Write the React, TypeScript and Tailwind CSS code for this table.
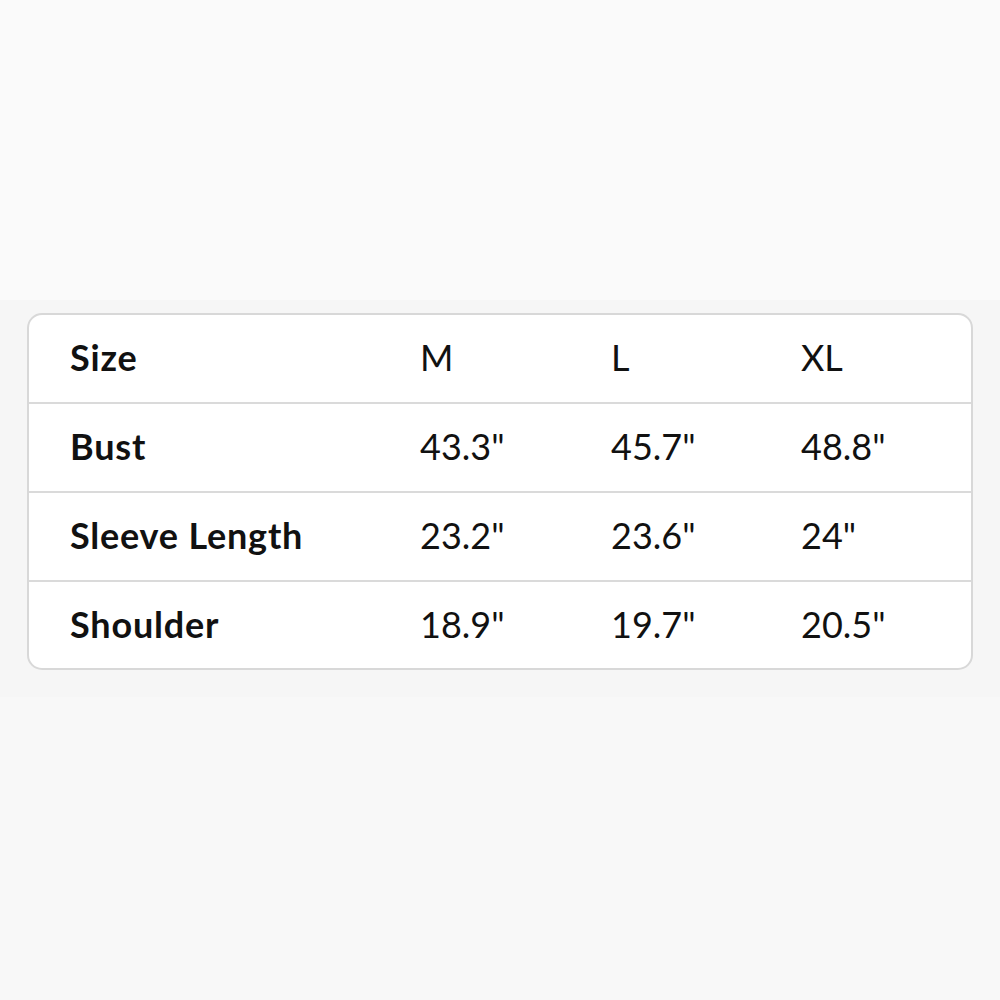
import React from "react";

const rows: [string, string, string, string][] = [
  ["Size", "M", "L", "XL"],
  ["Bust", '43.3"', '45.7"', '48.8"'],
  ["Sleeve Length", '23.2"', '23.6"', '24"'],
  ["Shoulder", '18.9"', '19.7"', '20.5"'],
];

export default function App() {
  return (
    <div
      className="w-[1000px] h-[1000px] bg-[#f9f9f9] flex flex-col"
      style={{ fontFamily: "Lato, 'Open Sans', sans-serif" }}
    >
      <div className="h-[300px] bg-[#fafafa]" />
      <div className="h-[397px] bg-[#f6f6f6] px-[27px] pt-[13px]">
        <div className="bg-white border-2 border-[#d8d8d8] rounded-[15px] overflow-hidden">
          {rows.map((r, i) => (
            <div
              key={i}
              className={`grid grid-cols-[350px_191px_190px_1fr] items-center pl-[41px] pb-[3px] text-[#111111] ${
                i < rows.length - 1 ? "h-[89px] border-b-2 border-[#dadada]" : "h-[86px]"
              }`}
            >
              <div className="text-[36px] font-bold tracking-[0.8px]">{r[0]}</div>
              <div className="text-[36px]">{r[1]}</div>
              <div className="text-[36px]">{r[2]}</div>
              <div className="text-[36px]">{r[3]}</div>
            </div>
          ))}
        </div>
      </div>
      <div className="flex-1 bg-[#f8f8f8]" />
    </div>
  );
}
